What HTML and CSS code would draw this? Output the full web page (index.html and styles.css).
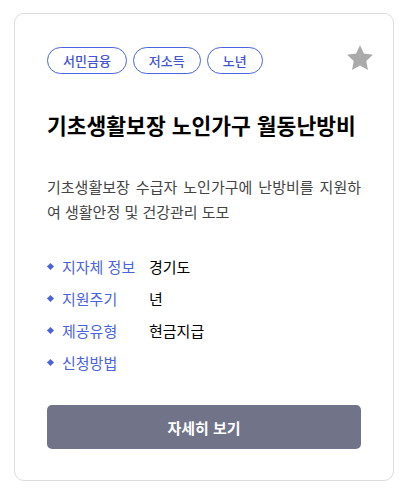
FILE: index.html
```html
<!DOCTYPE html>
<html lang="ko">
<head>
    <meta charset="utf-8">
    <meta name="viewport" content="width=device-width, initial-scale=1.0">
    <title>복지 서비스</title>
    <link rel="stylesheet" href="styles.css">
</head>
<body>

<div class="card">
    <div class="card-top">
        <div class="tags">
            <span class="tag">서민금융</span>
            <span class="tag">저소득</span>
            <span class="tag">노년</span>
        </div>
        <button class="star" aria-label="즐겨찾기">
            <svg width="30" height="30" viewBox="0 0 24 24"><path fill="#aaaaaa" d="M12 1.8l3.1 6.6 7.2.9-5.3 5 1.4 7.2L12 18l-6.4 3.5L7 14.3l-5.3-5 7.2-.9z"/></svg>
        </button>
    </div>

    <h2 class="title">기초생활보장 노인가구 월동난방비</h2>

    <p class="desc">기초생활보장 수급자 노인가구에 난방비를 지원하여 생활안정 및 건강관리 도모</p>

    <ul class="info">
        <li><span class="label">지자체 정보</span><span class="value">경기도</span></li>
        <li><span class="label">지원주기</span><span class="value">년</span></li>
        <li><span class="label">제공유형</span><span class="value">현금지급</span></li>
        <li><span class="label">신청방법</span><span class="value"></span></li>
    </ul>

    <button class="detail">자세히 보기</button>
</div>

</body>
</html>
```

FILE: styles.css
```css
body {
    margin: 0;
    padding: 13px 9px 6px 14px;
    font-family: "Noto Sans CJK KR", "Noto Sans", sans-serif;
    background: #fff;
    color: #111;
}
.card {
    border: 1px solid #dcdcdc;
    border-radius: 10px;
    padding: 32px 32px 31px 32px;
}
.card-top {
    display: flex;
    justify-content: space-between;
    align-items: center;
    height: 28px;
}
.tags {
    display: flex;
    gap: 6px;
}
.tag {
    display: inline-flex;
    align-items: center;
    height: 25px;
    padding: 0 15px;
    border: 1px solid #4a63e0;
    border-radius: 14px;
    color: #4354d4;
    font-size: 13px;
    font-weight: 500;
}
.star {
    border: none;
    background: none;
    padding: 0;
    margin-right: -14px;
    margin-top: -2px;
    cursor: pointer;
}
.title {
    margin: 37px 0 0;
    font-size: 21.5px;
    font-weight: 700;
    line-height: 28px;
    color: #000;
    white-space: nowrap;
}
.desc {
    margin: 35px 0 0;
    font-size: 15px;
    line-height: 25px;
    color: #444;
    text-align: justify;
    word-break: break-all;
}
.info {
    list-style: none;
    margin: 26px 0 0;
    padding: 0;
}
.info li {
    display: flex;
    align-items: center;
    height: 32px;
    font-size: 15px;
}
.info li::before {
    content: "";
    width: 5px;
    height: 5px;
    background: #4a63e0;
    transform: rotate(45deg);
    margin: 0 9px 0 1px;
}
.label {
    width: 87px;
    color: #4a63e0;
}
.value {
    color: #000;
}
.detail {
    display: block;
    width: 100%;
    height: 44px;
    margin-top: 27px;
    border: none;
    border-radius: 5px;
    background: #717489;
    color: #fff;
    font-family: inherit;
    font-size: 15px;
    font-weight: 700;
    cursor: pointer;
}
```
